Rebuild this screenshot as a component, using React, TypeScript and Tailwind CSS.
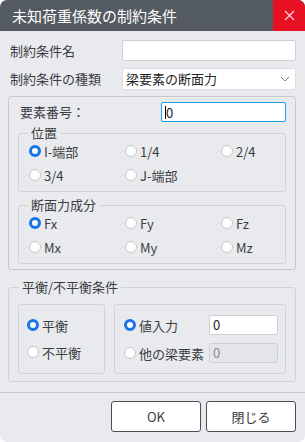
const FONT = "font-['Noto_Sans_CJK_JP','Noto_Sans',sans-serif]";

function Radio({
  label,
  checked = false,
}: {
  label: string;
  checked?: boolean;
}) {
  return (
    <div className="flex items-center gap-[3px] h-[20px]">
      {checked ? (
        <span className="w-[12px] h-[12px] rounded-full border-[3.5px] border-[#1a73e8] bg-white shrink-0" />
      ) : (
        <span className="w-[12px] h-[12px] rounded-full border border-[#c4c7cc] bg-white shrink-0" />
      )}
      <span className="text-[13px] leading-none text-[#3a3d42]">{label}</span>
    </div>
  );
}

function Group({
  legend,
  className,
  children,
}: {
  legend: string;
  className: string;
  children: React.ReactNode;
}) {
  return (
    <fieldset
      className={`border border-[#cfd2d6] rounded-[3px] px-[10px] ${className}`}
    >
      <legend className="px-[3px] ml-[-1px] text-[13px] leading-[14px] text-[#3a3d42]">
        {legend}
      </legend>
      {children}
    </fieldset>
  );
}

function RadioGrid({
  items,
  checked,
}: {
  items: string[];
  checked: string;
}) {
  return (
    <div className="grid grid-cols-[96px_96px_1fr] gap-y-[4px]">
      {items.map((it) => (
        <Radio key={it} label={it} checked={it === checked} />
      ))}
    </div>
  );
}

export default function App() {
  return (
    <div className={`w-[305px] h-[442px] bg-white ${FONT}`}>
      <div className="w-full h-full rounded-[7px] overflow-hidden bg-[#e9eaee] flex flex-col">
        <div className="h-[31px] bg-[#545a61] flex items-center shrink-0">
          <span className="flex-1 pl-[12px] text-[15px] text-white leading-none">
            未知荷重係数の制約条件
          </span>
          <div className="w-[32px] h-full bg-[#e81123] flex items-center justify-center">
            <svg width="11" height="11" viewBox="0 0 11 11">
              <path d="M1 1L10 10M10 1L1 10" stroke="#ffd6da" strokeWidth="1.2" />
            </svg>
          </div>
        </div>

        <div className="flex-1 pt-[9px] flex flex-col">
          <div className="flex items-center h-[21px] pl-[10px] pr-[9px]">
            <span className="w-[112px] text-[13px] text-[#3a3d42]">制約条件名</span>
            <div className="flex-1 h-[21px] bg-white border border-[#cdd0d4] rounded-[2px]" />
          </div>
          <div className="flex items-center h-[22px] mt-[7px] pl-[10px] pr-[9px]">
            <span className="w-[112px] text-[13px] text-[#3a3d42]">制約条件の種類</span>
            <div className="flex-1 h-[22px] bg-white border border-[#dcdfe2] flex items-center pl-[3px] pr-[5px]">
              <span className="flex-1 text-[13px] text-[#1f2226]">梁要素の断面力</span>
              <svg width="10" height="6" viewBox="0 0 10 6">
                <path d="M1 1L5 5L9 1" fill="none" stroke="#7a7f86" strokeWidth="1" />
              </svg>
            </div>
          </div>

          <div className="mt-[6px] mx-[8px] mr-[9px] h-[174px] border border-[#c6c9ce] rounded-[3px] px-[9px] pt-[5px]">
            <div className="flex items-center h-[20px]">
              <span className="w-[143px] pl-[2px] text-[13px] text-[#3a3d42]">要素番号：</span>
              <div className="flex-1 h-[20px] bg-white border border-[#1aa0e6] rounded-[2px] flex items-center pl-[3px]">
                <span className="w-px h-[13px] bg-black" />
                <span className="text-[13px] text-[#1f2226] leading-none">0</span>
              </div>
            </div>
            <Group legend="位置" className="mt-[4px] h-[66px] pt-[1px]">
              <RadioGrid items={["I-端部", "1/4", "2/4", "3/4", "J-端部"]} checked="I-端部" />
            </Group>
            <Group legend="断面力成分" className="mt-[6px] h-[66px] pt-[1px]">
              <RadioGrid items={["Fx", "Fy", "Fz", "Mx", "My", "Mz"]} checked="Fx" />
            </Group>
          </div>

          <fieldset className="mt-[10px] mx-[8px] mr-[9px] h-[102px] border border-[#cfd2d6] rounded-[3px] px-[9px]">
            <legend className="px-[3px] ml-[1px] text-[13px] leading-[14px] text-[#3a3d42]">
              平衡/不平衡条件
            </legend>
            <div className="flex gap-[9px] mt-[10px] h-[70px]">
              <div className="w-[87px] border border-[#cfd2d6] rounded-[3px] pl-[8px] pt-[10px] flex flex-col gap-[7px]">
                <Radio label="平衡" checked />
                <Radio label="不平衡" />
              </div>
              <div className="flex-1 border border-[#cfd2d6] rounded-[3px] pl-[9px] pr-[7px] pt-[10px] flex flex-col gap-[8px]">
                <div className="flex items-center justify-between h-[20px]">
                  <Radio label="値入力" checked />
                  <div className="w-[69px] h-[20px] bg-white border border-[#cdd0d4] rounded-[2px] flex items-center pl-[3px] text-[13px] text-[#1f2226]">
                    0
                  </div>
                </div>
                <div className="flex items-center justify-between h-[20px]">
                  <Radio label="他の梁要素" />
                  <div className="w-[69px] h-[20px] bg-[#e4e5e8] border border-[#cdd0d4] rounded-[2px] flex items-center pl-[3px] text-[13px] text-[#8a8e94]">
                    0
                  </div>
                </div>
              </div>
            </div>
          </fieldset>

          <div className="mt-[10px] border-t border-[#c6c9ce] flex justify-end gap-[5px] pr-[9px] pt-[8px]">
            <button className="w-[90px] h-[31px] bg-white border border-[#4a4e55] rounded-[3px] text-[13px] text-[#3a3d42]">
              OK
            </button>
            <button className="w-[90px] h-[31px] bg-white border border-[#4a4e55] rounded-[3px] text-[13px] text-[#3a3d42]">
              閉じる
            </button>
          </div>
        </div>
      </div>
    </div>
  );
}
